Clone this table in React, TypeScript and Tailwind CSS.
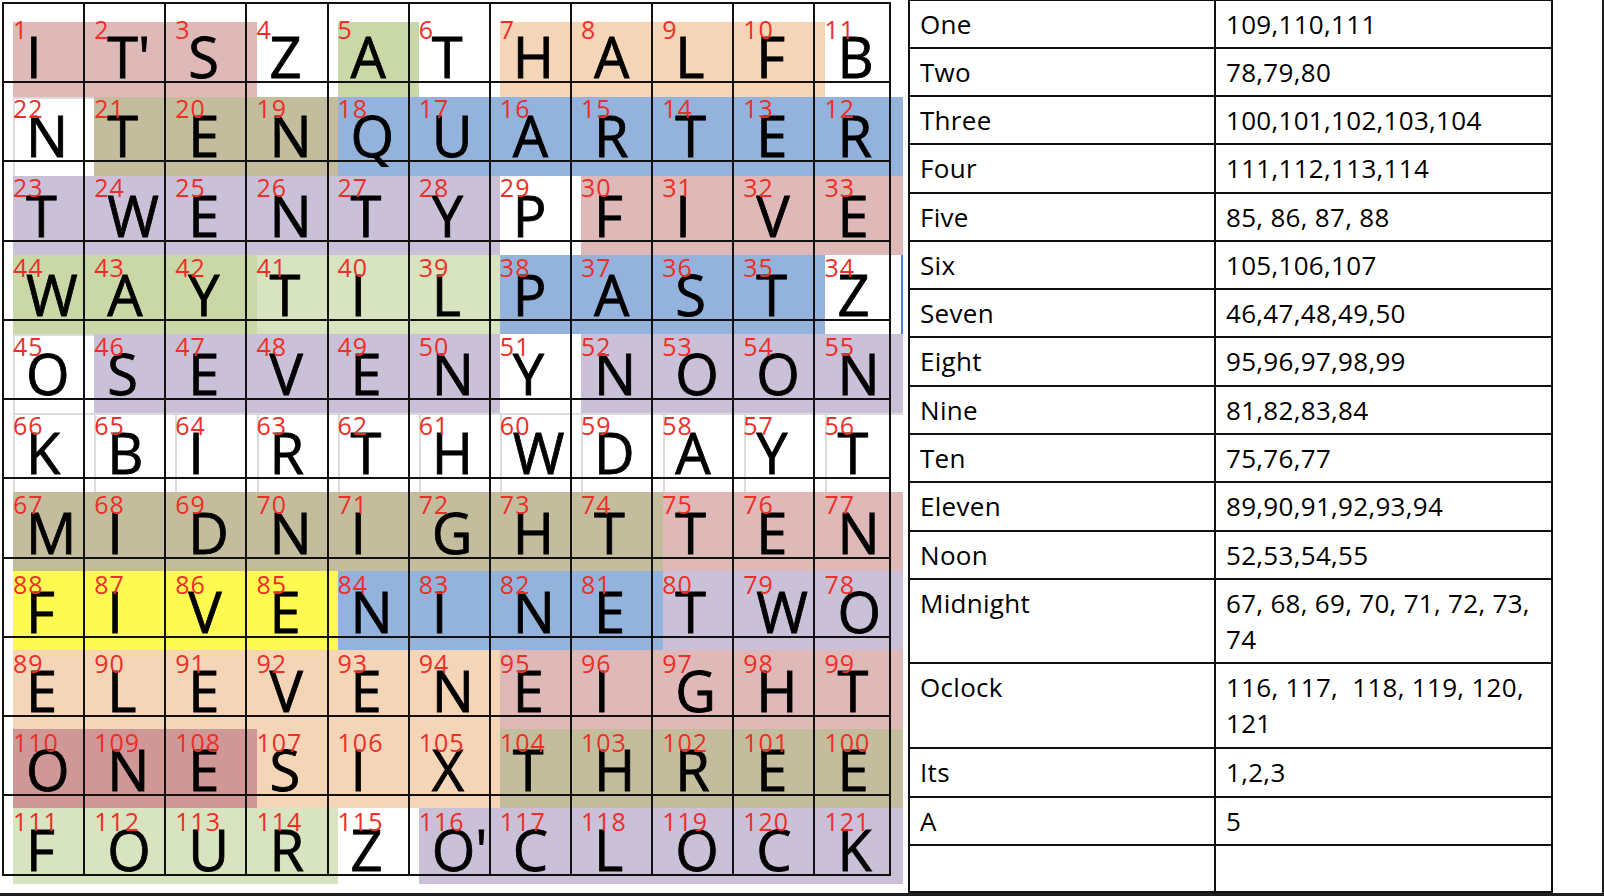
import React from "react";

const LETTERS: string[][] = [
  "I,T',S,Z,A,T,H,A,L,F,B",
  "N,T,E,N,Q,U,A,R,T,E,R",
  "T,W,E,N,T,Y,P,F,I,V,E",
  "W,A,Y,T,I,L,P,A,S,T,Z",
  "O,S,E,V,E,N,Y,N,O,O,N",
  "K,B,I,R,T,H,W,D,A,Y,T",
  "M,I,D,N,I,G,H,T,T,E,N",
  "F,I,V,E,N,I,N,E,T,W,O",
  "E,L,E,V,E,N,E,I,G,H,T",
  "O,N,E,S,I,X,T,H,R,E,E",
  "F,O,U,R,Z,O',C,L,O,C,K",
].map((r) => r.split(","));

function cellNum(r: number, c: number) {
  return r % 2 === 0 ? r * 11 + c + 1 : (r + 1) * 11 - c;
}

const PINK = "bg-[#dfb8b8]";
const GREEN = "bg-[#c9d8a6]";
const ORANGE = "bg-[#f5d5b7]";
const KHAKI = "bg-[#c4bd9d]";
const BLUE = "bg-[#93b2dc]";
const PURPLE = "bg-[#cac0d8]";
const LGREEN = "bg-[#d8e3c0]";
const YELLOW = "bg-[#fffa52]";
const DPINK = "bg-[#d09797]";
const WHITE = "bg-white border-l-2 border-t-2 border-[#dcdcdc]";
const WHITE0 = "bg-transparent";

const HL: string[][] = [
  [`col-span-3 ${PINK}`, `col-span-1 ${WHITE0}`, `col-span-1 ${GREEN}`, `col-span-1 ${WHITE0}`, `col-span-4 ${ORANGE}`, `col-span-1 ${WHITE0}`],
  [`col-span-1 ${WHITE}`, `col-span-3 ${KHAKI}`, `col-span-7 ${BLUE}`],
  [`col-span-6 ${PURPLE}`, `col-span-1 ${WHITE0}`, `col-span-4 ${PINK}`],
  [`col-span-3 ${GREEN}`, `col-span-3 ${LGREEN}`, `col-span-4 ${BLUE}`, `col-span-1 bg-white border-r-2 border-r-[#4f7fd0]`],
  [`col-span-1 ${WHITE}`, `col-span-5 ${PURPLE}`, `col-span-1 ${WHITE0}`, `col-span-4 ${PURPLE}`],
  Array.from({ length: 11 }, () => `col-span-1 ${WHITE}`),
  [`col-span-8 ${KHAKI}`, `col-span-3 ${PINK}`],
  [`col-span-4 ${YELLOW}`, `col-span-4 ${BLUE}`, `col-span-3 ${PURPLE}`],
  [`col-span-6 ${ORANGE}`, `col-span-5 ${PINK}`],
  [`col-span-3 ${DPINK}`, `col-span-3 ${ORANGE}`, `col-span-5 ${KHAKI}`],
  [`col-span-4 ${LGREEN}`, `col-span-1 ${WHITE0}`, `col-span-6 ${PURPLE}`],
];

const TABLE: { label: string; value: string; h: string }[] = [
  { label: "One", value: "109,110,111", h: "h-[48px]" },
  { label: "Two", value: "78,79,80", h: "h-[48px]" },
  { label: "Three", value: "100,101,102,103,104", h: "h-[48px]" },
  { label: "Four", value: "111,112,113,114", h: "h-[49px]" },
  { label: "Five", value: "85, 86, 87, 88", h: "h-[48px]" },
  { label: "Six", value: "105,106,107", h: "h-[48px]" },
  { label: "Seven", value: "46,47,48,49,50", h: "h-[48px]" },
  { label: "Eight", value: "95,96,97,98,99", h: "h-[49px]" },
  { label: "Nine", value: "81,82,83,84", h: "h-[48px]" },
  { label: "Ten", value: "75,76,77", h: "h-[48px]" },
  { label: "Eleven", value: "89,90,91,92,93,94", h: "h-[49px]" },
  { label: "Noon", value: "52,53,54,55", h: "h-[48px]" },
  { label: "Midnight", value: "67, 68, 69, 70, 71, 72, 73, 74", h: "h-[84px]" },
  { label: "Oclock", value: "116, 117,  118, 119, 120, 121", h: "h-[85px]" },
  { label: "Its", value: "1,2,3", h: "h-[49px]" },
  { label: "A", value: "5", h: "h-[48px]" },
  { label: "", value: "", h: "h-[47px]" },
];

export default function App() {
  return (
    <div className="w-[1604px] h-[896px] bg-white overflow-hidden border-r-2 border-b-[3px] border-[#1e1e1e] flex font-['Open_Sans',sans-serif]">
      {/* Word clock grid */}
      <div className="relative w-[908px] shrink-0 h-full">
        {/* highlight overlay layer */}
        <div className="absolute left-[13px] top-[22px] grid grid-cols-[repeat(10,81.2px)_78px] grid-rows-[75px_repeat(9,79px)_76px]">
          {HL.map((row, r) =>
            row.map((cls, i) => <div key={`${r}-${i}`} className={cls} />)
          )}
        </div>
        {/* letters */}
        <div className="relative z-10 ml-[2px] mt-[2px] w-fit border-l-2 border-t-2 border-[#111] grid grid-cols-[repeat(10,81.15px)_75.5px] grid-rows-[repeat(11,79.24px)]">
          {LETTERS.map((row, r) =>
            row.map((ch, c) => (
              <div
                key={`${r}-${c}`}
                className="relative border-r-2 border-b-2 border-[#111] flex items-end"
              >
                <span className="absolute block left-[9px] top-[17px] text-[25px] leading-[16px] tracking-[1px] text-[#ec2f27]">
                  {cellNum(r, c)}
                </span>
                <span className="block pl-[22px] mb-[9px] text-[56px] leading-[32px] text-black [-webkit-text-stroke:0.8px_#000]">
                  {ch}
                </span>
              </div>
            ))
          )}
        </div>
      </div>

      {/* Legend table */}
      <div className="w-[645px] shrink-0 self-start border-l-2 border-t border-[#111] text-[26px] leading-[36px] tracking-[0.3px] text-black">
        {TABLE.map((row, i) => (
          <div key={i} className={`grid grid-cols-[306px_337px] ${row.h}`}>
            <div className="border-r-2 border-b-2 border-[#111] pl-[10px] pt-[5px]">
              {row.label}
            </div>
            <div className="border-r-2 border-b-2 border-[#111] pl-[10px] pr-[8px] pt-[5px] whitespace-pre-wrap">
              {row.value}
            </div>
          </div>
        ))}
      </div>
    </div>
  );
}
